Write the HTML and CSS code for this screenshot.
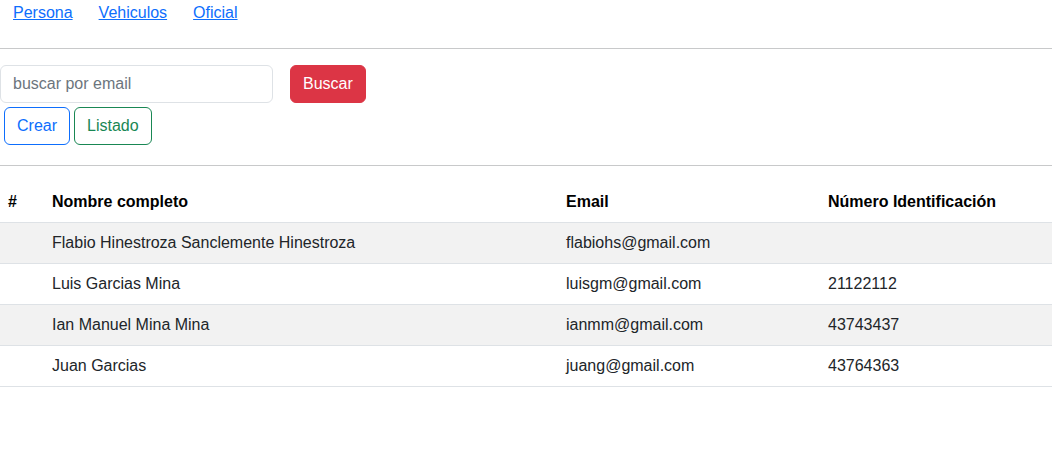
FILE: index.html
```
<!DOCTYPE html>
<html lang="es">
<head>
<meta charset="utf-8">
<title>Personas</title>
<link rel="stylesheet" href="styles.css">
</head>
<body>
<nav class="nav">
  <a href="#" class="nav-link">Persona</a>
  <a href="#" class="nav-link">Vehiculos</a>
  <a href="#" class="nav-link">Oficial</a>
</nav>
<hr class="rule">
<div class="search">
  <input class="input" type="text" placeholder="buscar por email">
  <button class="btn btn-danger">Buscar</button>
</div>
<div class="actions">
  <button class="btn btn-outline-primary">Crear</button>
  <button class="btn btn-outline-success">Listado</button>
</div>
<hr class="rule rule-lower">
<table class="table">
  <thead>
    <tr><th class="c1">#</th><th class="c2">Nombre completo</th><th class="c3">Email</th><th class="c4">Número Identificación</th></tr>
  </thead>
  <tbody>
    <tr class="odd"><td></td><td>Flabio Hinestroza Sanclemente Hinestroza</td><td>flabiohs@gmail.com</td><td></td></tr>
    <tr><td></td><td>Luis Garcias Mina</td><td>luisgm@gmail.com</td><td>21122112</td></tr>
    <tr class="odd"><td></td><td>Ian Manuel Mina Mina</td><td>ianmm@gmail.com</td><td>43743437</td></tr>
    <tr><td></td><td>Juan Garcias</td><td>juang@gmail.com</td><td>43764363</td></tr>
  </tbody>
</table>
</body>
</html>
```
FILE: styles.css
```
* { box-sizing: border-box; }
body {
  margin: 0;
  font-family: "Liberation Sans", Arial, sans-serif;
  font-size: 16px;
  line-height: 24px;
  color: #212529;
  background: #fff;
}
.nav {
  display: flex;
  gap: 26px;
  padding: 1px 0 7px 13px;
}
.nav-link {
  color: #0d6efd;
  text-decoration: underline;
}
.rule {
  margin: 16px 0;
  border: 0;
  border-top: 1px solid #c8c9ca;
  height: 0;
}
.rule-lower { margin-top: 20px; }
.search {
  display: flex;
  align-items: center;
  gap: 17px;
}
.input {
  width: 273px;
  height: 38px;
  padding: 6px 12px;
  font: inherit;
  color: #212529;
  border: 1px solid #dee2e6;
  border-radius: 6px;
  background: #fff;
}
.input::placeholder { color: #6c757d; }
.btn {
  height: 38px;
  padding: 6px 12px;
  font: inherit;
  border: 1px solid transparent;
  border-radius: 6px;
  background: transparent;
  cursor: pointer;
}
.btn-danger { background: #dc3545; border-color: #dc3545; color: #fff; }
.btn-outline-primary { color: #0d6efd; border-color: #0d6efd; }
.btn-outline-success { color: #198754; border-color: #198754; }
.actions {
  display: flex;
  gap: 4px;
  padding: 4px 0 0 4px;
}
.table {
  width: 100%;
  border-collapse: collapse;
}
.table th, .table td {
  padding: 8px;
  text-align: left;
  border-bottom: 1px solid #dee2e6;
  vertical-align: top;
}
.table th { font-weight: bold; color: #000; }
.table tbody .odd td { background: #f2f2f2; }
.c1 { width: 44px; }
.c2 { width: 514px; }
.c3 { width: 262px; }
```
